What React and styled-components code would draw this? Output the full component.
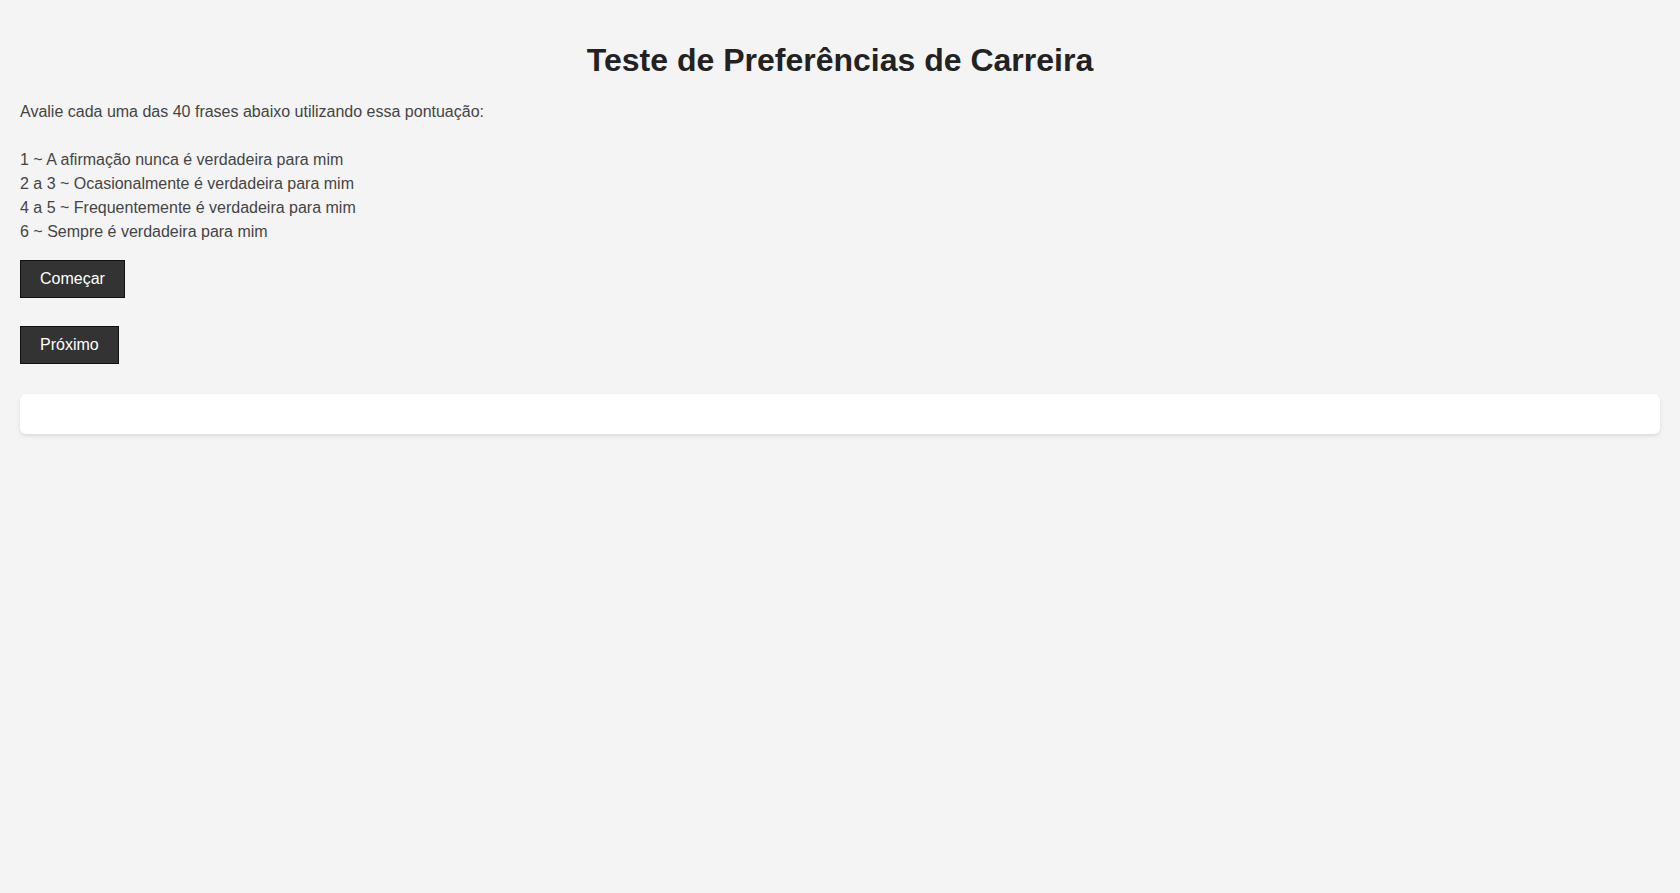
import React from "react";
import styled, { createGlobalStyle } from "styled-components";

const GlobalStyle = createGlobalStyle`
  body {
    margin: 0;
    padding: 20px;
    background-color: #f4f4f4;
    font-family: Arial, "Liberation Sans", sans-serif;
    color: #333;
  }
`;

const Title = styled.h1`
  text-align: center;
  font-size: 32px;
  color: #222;
  margin: 22px 0 21px;
`;

const Instructions = styled.p`
  font-size: 16px;
  line-height: 24px;
  color: #444;
  white-space: pre-line;
  margin: 0 0 16px;
`;

const Actions = styled.div`
  display: flex;
  flex-direction: column;
  align-items: flex-start;
  gap: 28px;
  margin-bottom: 30px;
`;

const Button = styled.button`
  background-color: #333;
  color: #fff;
  border: 1px solid #111;
  padding: 9px 19px;
  font-family: Arial, "Liberation Sans", sans-serif;
  font-size: 16px;
  line-height: 18px;
  cursor: pointer;
`;

const Card = styled.div`
  background-color: #fff;
  border-radius: 6px;
  box-shadow: 0 2px 4px rgba(0, 0, 0, 0.1);
  padding: 20px;
`;

const text = `Avalie cada uma das 40 frases abaixo utilizando essa pontuação:

1 ~ A afirmação nunca é verdadeira para mim
2 a 3 ~ Ocasionalmente é verdadeira para mim
4 a 5 ~ Frequentemente é verdadeira para mim
6 ~ Sempre é verdadeira para mim`;

export default function App() {
  return (
    <>
      <GlobalStyle />
      <Title>Teste de Preferências de Carreira</Title>
      <Instructions>{text}</Instructions>
      <Actions>
        <Button>Começar</Button>
        <Button>Próximo</Button>
      </Actions>
      <Card />
    </>
  );
}
